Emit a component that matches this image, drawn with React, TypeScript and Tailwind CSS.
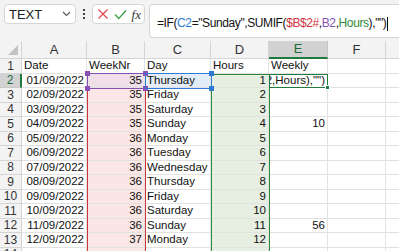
import React from "react";

const ROWS: [string, string, string, string, string][] = [
  ["Date", "WeekNr", "Day", "Hours", "Weekly"],
  ["01/09/2022", "35", "Thursday", "1", ""],
  ["02/09/2022", "35", "Friday", "2", ""],
  ["03/09/2022", "35", "Saturday", "3", ""],
  ["04/09/2022", "35", "Sunday", "4", "10"],
  ["05/09/2022", "36", "Monday", "5", ""],
  ["06/09/2022", "36", "Tuesday", "6", ""],
  ["07/09/2022", "36", "Wednesday", "7", ""],
  ["08/09/2022", "36", "Thursday", "8", ""],
  ["09/09/2022", "36", "Friday", "9", ""],
  ["10/09/2022", "36", "Saturday", "10", ""],
  ["11/09/2022", "36", "Sunday", "11", "56"],
  ["12/09/2022", "37", "Monday", "12", ""],
  ["", "", "", "", ""],
];

const COLS = ["A", "B", "C", "D", "E", "F", "G"];
const WIDTHS = [65, 58, 66, 58, 59, 58, 60];
const ROWH = 14.5;

function Handle({ x, y, color }: { x: number; y: number; color: string }) {
  return (
    <div
      className="absolute w-[5px] h-[5px]"
      style={{ left: x - 2.5, top: y - 2.5, background: color }}
    />
  );
}

export default function App() {
  const left = [22];
  WIDTHS.forEach((w, i) => left.push(left[i] + w));
  const top0 = 59;
  const rowTop = (r: number) => top0 + (r - 1) * ROWH;

  return (
    <div
      className="w-[399px] h-[251px] overflow-hidden bg-[#f3f3f3] relative"
      style={{ fontFamily: '"Liberation Sans", Arial, sans-serif' }}
    >
      {/* Toolbar */}
      <div className="h-[41px] flex items-start pt-[4px] pl-[4px]">
        <div className="shrink-0 w-[72px] h-[20px] bg-white border border-[#d6d6d6] rounded-[4px] flex items-center justify-between pl-[4px] pr-[4px]">
          <span className="text-[13px] text-[#222] leading-none">TEXT</span>
          <svg width="9" height="6" viewBox="0 0 9 6">
            <path d="M1 1 L4.5 4.5 L8 1" stroke="#555" strokeWidth="1.1" fill="none" />
          </svg>
        </div>
        <div className="shrink-0 w-[16px] h-[20px] flex flex-col items-center justify-center gap-[2px]">
          <div className="w-[2px] h-[2px] bg-[#444]" />
          <div className="w-[2px] h-[2px] bg-[#444]" />
          <div className="w-[2px] h-[2px] bg-[#444]" />
        </div>
        <div className="shrink-0 w-[53px] h-[20px] bg-white border border-[#d6d6d6] rounded-[4px] flex items-center justify-between pl-[4px] pr-[3px]">
          <svg width="12" height="12" viewBox="0 0 12 12">
            <path d="M1.5 1.5 L10.5 10.5 M10.5 1.5 L1.5 10.5" stroke="#e0474f" strokeWidth="1.3" />
          </svg>
          <svg width="13" height="11" viewBox="0 0 13 11">
            <path d="M1 5.5 L4.8 9.5 L12 1.5" stroke="#3aa24a" strokeWidth="1.3" fill="none" />
          </svg>
          <span
            className="text-[13px] italic text-[#333] leading-none"
            style={{ fontFamily: '"Liberation Serif", "Times New Roman", serif' }}
          >
            fx
          </span>
        </div>
        <div className="ml-[4px] min-w-0 flex-1 h-[34px] bg-white border border-[#d6d6d6] border-r-0 rounded-l-[4px] pl-[7px] pt-[5px] overflow-hidden">
          <span className="text-[12px] tracking-[-0.4px] text-[#111] leading-[15px] whitespace-nowrap">
            =IF(<span className="text-[#2f7bd4]">C2</span>="Sunday",SUMIF(
            <span className="text-[#d0343d]">$B$2#</span>,
            <span className="text-[#8a4fb4]">B2</span>,
            <span className="text-[#2d8a3a]">Hours</span>),"")
            <span className="inline-block w-[1px] h-[14px] bg-black align-middle ml-[1px]" />
          </span>
        </div>
      </div>

      {/* Grid */}
      <div
        className="absolute left-0 top-[41px] grid"
        style={{
          gridTemplateColumns: `22px ${WIDTHS.map((w) => w + "px").join(" ")}`,
          gridTemplateRows: `18px repeat(${ROWS.length}, ${ROWH}px)`,
        }}
      >
        <div className="bg-[#f3f3f3] border-r border-b border-[#d4d4d4] relative">
          <svg className="absolute right-[3px] bottom-[3px]" width="10" height="10" viewBox="0 0 10 10">
            <path d="M10 0 L10 10 L0 10 Z" fill="#c3c3c3" />
          </svg>
        </div>
        {COLS.map((c) => (
          <div
            key={c}
            className={
              c === "E"
                ? "bg-[#d2d2d2] border-r border-[#c4c4c4] border-b-2 border-b-[#1f7a3e] flex items-center justify-center text-[13px] text-[#1f6b3a]"
                : "bg-[#f3f3f3] border-r border-b border-[#d4d4d4] flex items-center justify-center text-[13px] text-[#333]"
            }
          >
            {c}
          </div>
        ))}
        {ROWS.map((row, ri) => {
          const r = ri + 1;
          return (
            <React.Fragment key={r}>
              <div
                className={
                  r === 2
                    ? "bg-[#d2d2d2] border-b border-[#c8c8c8] border-r-2 border-r-[#1f7a3e] flex items-center justify-center text-[12px] text-[#1f6b3a]"
                    : "bg-[#f3f3f3] border-b border-r border-[#d4d4d4] flex items-center justify-center text-[12px] text-[#333]"
                }
              >
                {r}
              </div>
              {COLS.map((c, ci) => {
                const v = ci < 5 ? row[ci] : "";
                let bg = "bg-white";
                if (r >= 2 && c === "B") bg = r === 2 ? "bg-[#efdfe9]" : "bg-[#fbe6e6]";
                if (r >= 2 && c === "D") bg = "bg-[#e6efe2]";
                if (r === 2 && c === "C") bg = "bg-[#e2edf8]";
                const right = r >= 2 && (c === "A" || c === "B" || c === "D" || c === "E");
                return (
                  <div
                    key={c}
                    className={`${bg} border-r border-b border-[#e1e1e1] text-[11.5px] leading-none text-[#111] whitespace-nowrap flex items-end pb-[1px] px-[2px] overflow-hidden ${
                      right ? "justify-end" : "justify-start"
                    }`}
                  >
                    {r === 2 && c === "E" ? <span>2,Hours),"")</span> : v}
                  </div>
                );
              })}
            </React.Fragment>
          );
        })}
      </div>

      {/* Overlays: formula reference highlights */}
      <div className="absolute inset-0 pointer-events-none">
        <div
          className="absolute border-l-[1.5px] border-r-[1.5px] border-[#d0343d]"
          style={{ left: left[1] - 0.5, width: left[2] - left[1] + 1, top: rowTop(2), height: 251 - rowTop(2) }}
        />
        <div
          className="absolute border-[1.5px] border-[#8a4fb4]"
          style={{ left: left[1] - 0.5, width: left[2] - left[1] + 1, top: rowTop(2) - 0.5, height: ROWH + 1 }}
        />
        <Handle x={left[1]} y={rowTop(2)} color="#8a4fb4" />
        <Handle x={left[2]} y={rowTop(2)} color="#8a4fb4" />
        <Handle x={left[1]} y={rowTop(3)} color="#8a4fb4" />
        <Handle x={left[2]} y={rowTop(3)} color="#8a4fb4" />
        <div
          className="absolute border-l-[1.5px] border-r-[1.5px] border-t-[1.5px] border-[#2d8a3a]"
          style={{ left: left[3] - 0.5, width: left[4] - left[3] + 1, top: rowTop(2), height: 251 - rowTop(2) }}
        />
        <div
          className="absolute border-[1.5px] border-[#2f7bd4]"
          style={{ left: left[2] - 0.5, width: left[3] - left[2] + 1, top: rowTop(2) - 0.5, height: ROWH + 1 }}
        />
        <Handle x={left[3]} y={rowTop(2)} color="#2f7bd4" />
        <Handle x={left[3]} y={rowTop(3)} color="#2f7bd4" />
        <div
          className="absolute border-[1.5px] border-[#1f7a3e]"
          style={{ left: left[4], width: left[5] - left[4], top: rowTop(2), height: ROWH }}
        />
        <div
          className="absolute w-[5px] h-[5px] bg-[#1f7a3e] border border-white"
          style={{ left: left[5] - 3, top: rowTop(3) - 3 }}
        />
      </div>
    </div>
  );
}
